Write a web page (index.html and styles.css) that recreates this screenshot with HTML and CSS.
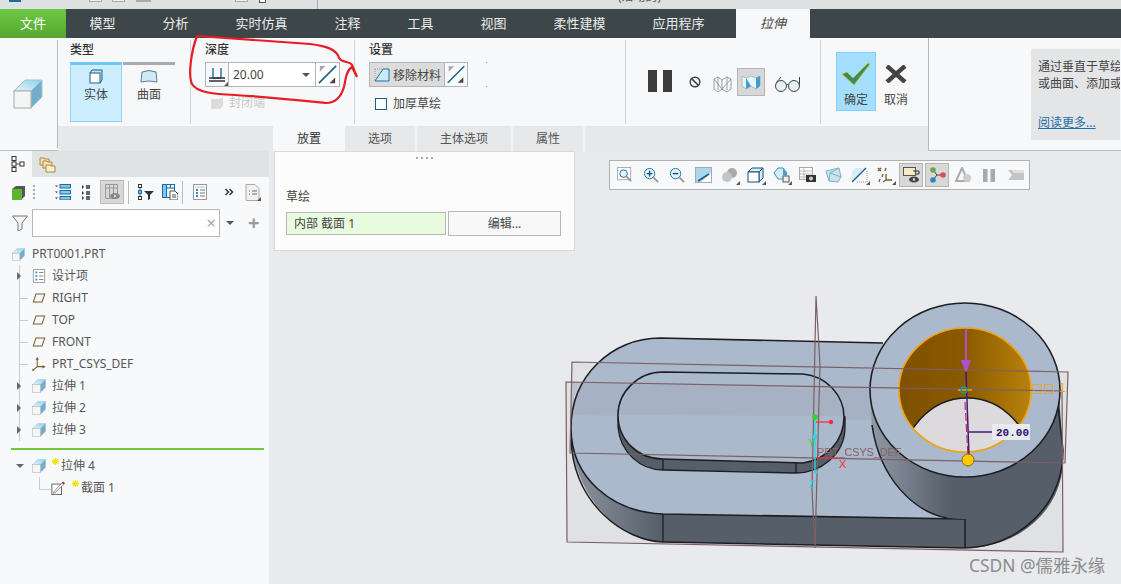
FILE: index.html
```html
<!DOCTYPE html>
<html lang="zh">
<head>
<meta charset="utf-8">
<title>拉伸</title>
<link rel="stylesheet" href="styles.css">
</head>
<body>
<svg class="defs" width="0" height="0">
  <defs>
    <linearGradient id="gTop" x1="0" y1="1" x2="1" y2="0"><stop offset="0" stop-color="#e4f4fb"/><stop offset="1" stop-color="#8fd0ea"/></linearGradient>
    <linearGradient id="gWall" gradientUnits="userSpaceOnUse" x1="571" y1="0" x2="663" y2="0"><stop offset="0" stop-color="#8a949f"/><stop offset="1" stop-color="#565e69"/></linearGradient>
    <linearGradient id="gBoss" gradientUnits="userSpaceOnUse" x1="872" y1="0" x2="950" y2="0"><stop offset="0" stop-color="#8e98a4"/><stop offset="1" stop-color="#565e69"/></linearGradient>
    <linearGradient id="gHole" gradientUnits="userSpaceOnUse" x1="898" y1="0" x2="1031" y2="0"><stop offset="0" stop-color="#7f5000"/><stop offset=".5" stop-color="#8a5a00"/><stop offset="1" stop-color="#b8820a"/></linearGradient>
    <symbol id="cube" viewBox="0 0 30 30">
      <path d="M1 12 12 1h17L18 12z" fill="url(#gTop)" stroke="#9cc7da"/>
      <path d="M18 12 29 1v17L18 29z" fill="#74adc9" stroke="#9cc7da"/>
      <rect x="1" y="12" width="17" height="17" fill="#f5f5f5" stroke="#a8a8a8"/>
    </symbol>
    <symbol id="flip" viewBox="0 0 24 24">
      <path d="M3 21 21 3" stroke="#1a5f86" stroke-width="1.6" fill="none"/>
      <path d="M4 3h6L4 9z" fill="#a8a8a8"/><path d="M20 21h-6l6-6z" fill="#444"/>
    </symbol>
    <symbol id="plane" viewBox="0 0 16 12">
      <path d="M4.5 1.5h10l-3 9h-10z" fill="none" stroke="#7a5c2e" stroke-width="1.2"/>
    </symbol>
    <symbol id="star" viewBox="0 0 8 8">
      <path d="M4 0v8M0 4h8M1 1l6 6M7 1 1 7" stroke="#f2e400" stroke-width="1.5"/>
    </symbol>
    <symbol id="corner" viewBox="0 0 4 4"><path d="M4 0v4H0z" fill="#555"/></symbol>
  </defs>
</svg>

<div class="app">
  <div class="titlebar">
    <span class="tb-a"></span><span class="tb-b tb-b1"></span><span class="tb-b tb-b2"></span><span class="tb-b tb-b3"></span><span class="tb-b tb-b4"></span><span class="tb-w"></span>
    <span class="tb-sep"></span>
    <span class="tb-title">(活动的)</span>
  </div>

  <nav class="tabs">
    <span class="tab tab-file">文件</span>
    <span class="tab">模型</span>
    <span class="tab">分析</span>
    <span class="tab">实时仿真</span>
    <span class="tab">注释</span>
    <span class="tab">工具</span>
    <span class="tab">视图</span>
    <span class="tab">柔性建模</span>
    <span class="tab">应用程序</span>
    <span class="tab tab-active">拉伸</span>
  </nav>

  <section class="ribbon">
    <div class="rb-lead"><svg class="lead-cube"><use href="#cube"/></svg></div>
    <div class="rb-main">
      <div class="rb-groups">
        <div class="group g-type">
          <div class="g-label">类型</div>
          <div class="type-row">
            <div class="type-btn type-on">
              <svg width="16" height="16" viewBox="0 0 16 16"><path d="M2 4 4 1h10v10l-2 3z" fill="#bfe3f2" stroke="#1f5f7f"/><rect x="2" y="4" width="10" height="10" fill="#fff" stroke="#1f5f7f"/></svg>
              <span>实体</span>
            </div>
            <div class="type-btn">
              <svg width="18" height="16" viewBox="0 0 18 16"><path d="M2 3q7-3 14 0l1 10q-8-2-16 0z" fill="#cfeaf6" stroke="#5b7f90"/></svg>
              <span>曲面</span>
            </div>
          </div>
        </div>

        <div class="group g-depth">
          <div class="g-label">深度</div>
          <div class="depth-box">
            <div class="depth-type">
              <svg width="18" height="18" viewBox="0 0 18 18"><path d="M5 2v10h8V2" fill="none" stroke="#1a6fa0" stroke-width="1.4"/><path d="M1 12h16M1 15h16" stroke="#333" stroke-width="1.3"/></svg>
              <svg class="corner"><use href="#corner"/></svg>
            </div>
            <div class="depth-val"><span>20.00</span><i class="caret"></i></div>
            <svg class="flip-btn"><use href="#flip"/></svg>
          </div>
          <div class="closed">
            <svg width="14" height="14" viewBox="0 0 14 14"><path d="M1 3h9l3-2v9l-3 3H1z" fill="#dcdcdc"/></svg>
            <span>封闭端</span>
          </div>
        </div>

        <div class="group g-set">
          <div class="g-label">设置</div>
          <div class="set-row">
            <div class="remove-btn">
              <svg width="16" height="16" viewBox="0 0 16 16"><path d="M1 14 9 2h6v12z" fill="#c8ecfa" stroke="#1a6fa0"/><path d="M1 2h7" stroke="#999" stroke-dasharray="1 1"/><path d="M1 2v11" stroke="#999" stroke-dasharray="1 1"/></svg>
              <span>移除材料</span>
            </div>
            <svg class="flip-btn flip-set"><use href="#flip"/></svg>
            <div class="ticks"><i></i><i></i></div>
          </div>
          <label class="thicken"><i class="check"></i><span>加厚草绘</span></label>
        </div>

        <div class="group g-ctrl">
          <svg width="24" height="22" viewBox="0 0 24 22"><rect x="0" y="0" width="9" height="22" fill="#3b3b3b"/><rect x="15" y="0" width="9" height="22" fill="#3b3b3b"/></svg>
          <svg class="m-no" width="12" height="12" viewBox="0 0 12 12"><circle cx="6" cy="6" r="4.8" fill="none" stroke="#444" stroke-width="1.5"/><path d="M2.6 2.6l6.8 6.8" stroke="#444" stroke-width="1.5"/></svg>
          <svg class="m-wire" width="19" height="18" viewBox="0 0 19 18"><path d="M1 4l4-2 4 3 5-3 4 2v10l-4 3-5-3-4 3-4-3zM5 2v13M14 2v13M9 5v9M1 4l8 10M18 4l-9 10" fill="none" stroke="#888" stroke-width=".8"/></svg>
          <div class="shade-btn"><svg width="20" height="15" viewBox="0 0 20 15"><path d="M1 1l4 2 5-2 5 2 4-2v10l-4 3-5-3-5 3-4-3z" fill="#e4f5fc" stroke="#999" stroke-width=".6"/><path d="M5 3l5 8-5 3zM15 3l4-2v10l-4 3z" fill="#3f9fd0"/></svg></div>
          <svg class="m-glass" width="27" height="16" viewBox="0 0 27 16"><circle cx="7" cy="10" r="5.5" fill="#e4f1f6" stroke="#444"/><circle cx="20" cy="10" r="5.5" fill="#e4f1f6" stroke="#444"/><path d="M12.5 9q1-1 2 0M2 7l5-6M25.5 9V1" fill="none" stroke="#444"/></svg>
        </div>

        <div class="group g-ok">
          <div class="ok-btn">
            <svg width="30" height="24" viewBox="0 0 30 24"><path d="M1 12l5-2 6 6L27 1l2 1-16 21z" fill="#3d8a5f" stroke="#c9c92a" stroke-width=".8"/></svg>
            <span>确定</span>
          </div>
          <div class="cancel-btn">
            <svg width="22" height="18" viewBox="0 0 22 18"><path d="M2 1l18 16M20 1 2 17" stroke="#444" stroke-width="4.4"/></svg>
            <span>取消</span>
          </div>
        </div>
      </div>
      <div class="rb-tabs">
        <span class="rt rt-on">放置</span>
        <span class="rt">选项</span>
        <span class="rt rt-wide">主体选项</span>
        <span class="rt">属性</span>
      </div>
    </div>
    <div class="rb-help">
      <div class="help-box">
        <p>通过垂直于草绘</p>
        <p>或曲面、添加或</p>
        <a class="help-link">阅读更多...</a>
      </div>
    </div>
  </section>

  <div class="main">
    <aside class="side">
      <div class="side-tabs">
        <div class="side-tab">
          <svg width="14" height="16" viewBox="0 0 14 16"><path d="M3 4v9M3 8h6" stroke="#444"/><rect x="1" y="0.5" width="4" height="4" fill="#fff" stroke="#333"/><rect x="1" y="6" width="4" height="4" fill="#fff" stroke="#333"/><rect x="1" y="11.5" width="4" height="4" fill="#fff" stroke="#333"/><rect x="9" y="6" width="4" height="4" fill="#fff" stroke="#333"/></svg>
        </div>
        <svg class="folders" width="17" height="17" viewBox="0 0 17 17"><path d="M1 2h4l1 1h4v6H1z" fill="#f6e2b0" stroke="#a98a4a"/><path d="M4 5h4l1 1h4v6H4z" fill="#f6e2b0" stroke="#a98a4a"/><path d="M7 9h4l1 1h4v6H7z" fill="#fbeec8" stroke="#a98a4a"/></svg>
      </div>

      <div class="side-tools">
        <svg width="14" height="15" viewBox="0 0 14 15"><path d="M0 4l4-3h9v10l-3 3H0z" fill="#555"/><rect x="0" y="4" width="10" height="11" fill="#5cb531"/></svg>
        <i class="grip"></i>
        <svg class="t-list" width="16" height="16" viewBox="0 0 16 16"><path d="M0 1.5h3L1.5 3zM0 7.5h3L1.5 9zM0 13.5h3L1.5 15z" fill="#333"/><g fill="#7cc8ee" stroke="#1a6fa0"><rect x="5" y="0.5" width="10.500" height="3.500"/><rect x="5" y="6.500" width="10.500" height="3.500"/><rect x="5" y="12.500" width="10.500" height="3.500"/></g></svg>
        <svg class="t-grid" width="9" height="16" viewBox="0 0 9 16"><path d="M0 1l2 2-2 2zM0 7l2 2-2 2zM0 12l2 2-2 2z" fill="#333"/><rect x="4" y="1" width="4" height="4" fill="#666"/><rect x="4" y="7" width="4" height="4" fill="#666"/><rect x="4" y="12" width="4" height="4" fill="#666"/></svg>
        <div class="t-active"><svg width="15" height="16" viewBox="0 0 15 16"><path d="M.5.5h12v14H.5zM.5 4h12M4.500.5v14M8.500.5v14" fill="none" stroke="#999"/><ellipse cx="10" cy="12" rx="5" ry="3" fill="#888"/><circle cx="10" cy="12" r="1.200" fill="#ddd"/></svg></div>
        <i class="t-sep"></i>
        <svg class="t-m1" width="16" height="16" viewBox="0 0 16 16"><path d="M2 3v10" stroke="#1a6fa0"/><rect x=".5" y=".5" width="3" height="3" fill="#fff" stroke="#333"/><rect x=".5" y="6.500" width="3" height="3" fill="#7cc8ee" stroke="#1a6fa0"/><rect x=".5" y="12.500" width="3" height="3" fill="#fff" stroke="#333"/><path d="M6 7h10l-4 4v4l-2 1v-5z" fill="#333"/></svg>
        <svg class="t-m2" width="16" height="16" viewBox="0 0 16 16"><rect x=".5" y=".5" width="12" height="13" fill="#eaf6fc" stroke="#1a6fa0"/><rect x=".5" y=".5" width="4" height="13" fill="#7cc8ee" stroke="#1a6fa0"/><path d="M4.500 4h8M8.500.5V4" stroke="#1a6fa0"/><path d="M8 7h5l3 3v6H8z" fill="#fff" stroke="#555"/><path d="M10 11h4M10 13h4" stroke="#555"/></svg>
        <i class="t-sep"></i>
        <svg class="t-m3" width="14" height="16" viewBox="0 0 14 16"><rect x=".5" y=".5" width="13" height="15" fill="#fff" stroke="#999"/><path d="M2 3h10" stroke="#9cc"/><g fill="#2a8fc4"><rect x="3" y="5" width="2" height="2"/><rect x="3" y="8" width="2" height="2"/><rect x="3" y="11" width="2" height="2"/></g><path d="M7 6h5M7 9h5M7 12h5" stroke="#777"/></svg>
        <svg class="t-more" width="9" height="8" viewBox="0 0 9 8"><path d="M.5 1 3.500 4 .5 7M4.500 1 7.500 4 4.500 7" fill="none" stroke="#333" stroke-width="1.500"/></svg>
        <svg class="t-m4" width="16" height="17" viewBox="0 0 16 17"><path d="M1 .5h9l4 4v12H1z" fill="#f1f1f1" stroke="#aaa"/><path d="M4 7h1M7 7h5M4 10h1M7 10h5" stroke="#666"/><path d="M16 13v4h-4z" fill="#555"/></svg>
      </div>

      <div class="side-search">
        <svg width="16" height="16" viewBox="0 0 16 16"><path d="M.5 1h15L10 8v6l-4 2V8z" fill="#f3f3f3" stroke="#777"/></svg>
        <div class="search-box"><span class="clear">×</span></div>
        <i class="caret caret-s"></i>
        <span class="plus">+</span>
      </div>

      <div class="tree">
        <div class="row row-root"><svg class="ri"><use href="#cube"/></svg><span>PRT0001.PRT</span></div>
        <div class="row t open"><svg class="ri" viewBox="0 0 14 16"><rect x=".5" y=".5" width="13" height="15" fill="#fff" stroke="#999"/><g fill="#2a8fc4"><rect x="3" y="3" width="2" height="2"/><rect x="3" y="7" width="2" height="2"/><rect x="3" y="11" width="2" height="2"/></g><path d="M7 4h5M7 8h5M7 12h5" stroke="#777"/></svg><span>设计项</span></div>
        <div class="row t"><svg class="ri"><use href="#plane"/></svg><span>RIGHT</span></div>
        <div class="row t"><svg class="ri"><use href="#plane"/></svg><span>TOP</span></div>
        <div class="row t"><svg class="ri"><use href="#plane"/></svg><span>FRONT</span></div>
        <div class="row t"><svg class="ri" viewBox="0 0 16 16"><path d="M6 1v10l-5 4M6 11h9" fill="none" stroke="#7a5c2e" stroke-width="1.200"/><path d="M6 0l2 3H4zM15 11l-3-2v4zM0 16l1-3 2 2z" fill="#7a5c2e"/></svg><span>PRT_CSYS_DEF</span></div>
        <div class="row t open"><svg class="ri"><use href="#cube"/></svg><span>拉伸 1</span></div>
        <div class="row t open"><svg class="ri"><use href="#cube"/></svg><span>拉伸 2</span></div>
        <div class="row t open"><svg class="ri"><use href="#cube"/></svg><span>拉伸 3</span></div>
        <div class="insert"></div>
        <div class="row expanded"><svg class="ri"><use href="#cube"/></svg><svg class="st"><use href="#star"/></svg><span>拉伸 4</span></div>
        <div class="row sub"><svg class="ri" viewBox="0 0 15 16"><rect x=".5" y="3.500" width="11" height="12" fill="#fff" stroke="#555"/><path d="M3 12 12 2l2 2-9 9-3 1z" fill="#eee" stroke="#555" stroke-width=".7"/><path d="M12 2l1.500-1.500 2 2L14 4z" fill="#b03030"/></svg><svg class="st"><use href="#star"/></svg><span>截面 1</span></div>
      </div>
    </aside>

    <div class="canvas">
      <svg class="scene" width="852" height="433" viewBox="269 151 852 433">
        <path d="M572 362 1068 372 1065 463 570 453z" fill="#e0e1e3"/>
        <path d="M566 382 1062 391 1063 552 567 542z" fill="#e0e1e3"/>

        <path d="M571 425C571 440 571 450 574 460 588 510 625 541 663 542L965 548 965 500 700 470z" fill="url(#gWall)"/>
        <path d="M663 514 965 519V548L663 542z" fill="#565e69"/>
        <path d="M663 514V542" stroke="#1e1e22" stroke-width="1.300"/>
        <path d="M571 440C574 505 625 541 663 542L965 548" fill="none" stroke="#1e1e22" stroke-width="1.500"/>

        <path d="M660 338 883 343 964 519 663 514C612 512 571 478 571 428 571 376 612 338 660 338z" fill="#aab9cc"/>
        <path d="M572 382 880 388 875 420 571 415z" fill="#a3adbe" opacity=".55"/>
        <path d="M883 343 660 338C612 338 571 376 571 428 571 478 612 512 663 514L964 519" fill="none" stroke="#1e1e22" stroke-width="1.600"/>

        <path d="M618 427C620 452 640 470 663 470L796 473C820 473 845 455 845 427V417L618 415z" fill="#565e69" stroke="#1e1e22" stroke-width="1.300"/>
        <path d="M663 459V470M796 463V473" stroke="#1e1e22" stroke-width="1.300"/>
        <path d="M663 372 803 374C826 376 844 395 844 417 844 441 826 460 803 463L663 459C638 459 618 440 618 415 618 392 638 372 663 372z" fill="#aab9cc"/>
        <path d="M630 382 836 390 844 416 618 415z" fill="#a3adbe" opacity=".55"/>
        <path d="M663 372 803 374C826 376 844 395 844 417 844 441 826 460 803 463L663 459C638 459 618 440 618 415 618 392 638 372 663 372z" fill="none" stroke="#1e1e22" stroke-width="1.500"/>

        <path d="M870 390 872 430C880 480 915 512 947 518L965 519V548A97 88 0 0 0 1063 460L1059 390z" fill="url(#gBoss)"/>
        <path d="M872 425C880 480 915 512 947 518M965 519V548M965 548C1020 546 1063 505 1063 450L1058 405" fill="none" stroke="#1e1e22" stroke-width="1.500"/>

        <ellipse cx="965" cy="390" rx="95" ry="87" fill="#aab9cc" stroke="#1e1e22" stroke-width="1.600"/>
        <clipPath id="holeClip"><ellipse cx="965" cy="390" rx="66" ry="62"/></clipPath>
        <ellipse cx="965" cy="390" rx="66" ry="62" fill="url(#gHole)"/>
        <g clip-path="url(#holeClip)">
          <ellipse cx="967" cy="470" rx="66" ry="72" fill="#dcdadd" stroke="#1e1e22" stroke-width="1.500"/>
        </g>
        <ellipse cx="965" cy="390" rx="66" ry="62" fill="none" stroke="#f2a30f" stroke-width="1.600"/>

        <g fill="none" stroke="#7d5f64" stroke-width="1.200">
          <path d="M572 362 1068 372 1065 463 570 453z"/>
          <path d="M566 382 1062 391 1063 552 567 542z"/>
          <path d="M816 296 820 365 815 548 812 490z"/>
        </g>

        <path d="M966 329V362" stroke="#b04fd0" stroke-width="2"/>
        <path d="M961 360h10l-4 11h-2z" fill="#b04fd0"/>
        <path d="M966 372 969 457M969 432H993" fill="none" stroke="#3f1a78" stroke-width="1.500"/>
        <path d="M965 402 968 456" stroke="#c02870" stroke-width="1.200" stroke-dasharray="8 3"/>
        <path d="M958 390H972" stroke="#f2a30f" stroke-width="1.500"/>
        <circle cx="964" cy="390" r="3" fill="none" stroke="#1a9a9a" stroke-width="1.500"/>
        <circle cx="968" cy="460" r="6" fill="#ffc800" stroke="#8c6b00"/>
        <rect x="992" y="424" width="38" height="16" fill="#e8eaee"/>
        <text class="dim" x="996" y="436">20.00</text>
        <text class="hole-lab" x="1032" y="392">□□ 1</text>

        <path d="M815 417V472" stroke="#29d8e8" stroke-width="1.300"/>
        <path d="M816 422H831" stroke="#f03030" stroke-width="1.200"/>
        <path d="M817 458H838" stroke="#f03030" stroke-width="1.200"/>
        <circle cx="815" cy="417" r="2.800" fill="#2fd82f"/>
        <circle cx="831" cy="422" r="2.200" fill="#f03030"/>
        <circle cx="815" cy="437" r="2.400" fill="#29d8e8"/>
        <circle cx="816" cy="472" r="1.800" fill="#29d8e8"/>
        <text class="ax ax-y" x="808" y="447">Y</text>
        <text class="ax ax-x" x="839" y="468">X</text>
        <text class="ax ax-z" x="808" y="488">Z</text>
        <text class="csys" x="817" y="456">PRT_CSYS_DEF</text>
      </svg>

      <div class="float-panel">
        <div class="drag"></div>
        <div class="fp-label">草绘</div>
        <div class="fp-row">
          <div class="fp-input">内部 截面 1</div>
          <div class="fp-btn">编辑...</div>
        </div>
      </div>

      <div class="view-bar">
        <span class="vb"><svg width="16" height="16" viewBox="0 0 17 17"><rect x=".5" y=".5" width="14" height="13" fill="#fff" stroke="#aaa"/><circle cx="7" cy="7" r="4" fill="#e4f3fa" stroke="#1a6fa0"/><path d="M10 10l5 5" stroke="#999" stroke-width="2"/></svg></span>
        <span class="vb"><svg width="16" height="16" viewBox="0 0 17 17"><circle cx="7" cy="7" r="5.500" fill="#e4f3fa" stroke="#1a6fa0"/><path d="M4 7h6M7 4v6" stroke="#1a4f70" stroke-width="1.500"/><path d="M11 11l5 5" stroke="#999" stroke-width="2"/></svg></span>
        <span class="vb"><svg width="16" height="16" viewBox="0 0 17 17"><circle cx="7" cy="7" r="5.500" fill="#e4f3fa" stroke="#1a6fa0"/><path d="M4 7h6" stroke="#1a4f70" stroke-width="1.500"/><path d="M11 11l5 5" stroke="#999" stroke-width="2"/></svg></span>
        <span class="vb"><svg width="17" height="16" viewBox="0 0 17 16"><rect x=".5" y=".5" width="16" height="15" fill="#fff" stroke="#aaa"/><path d="M1 1h15v5L6 15H1z" fill="#a9d8ec"/><path d="M3 14 14 7" stroke="#1a5f86" stroke-width="1.500"/></svg></span>
        <span class="vb dd"><svg width="17" height="16" viewBox="0 0 17 16"><circle cx="11" cy="6" r="5" fill="#aaa"/><circle cx="6" cy="10" r="5" fill="#c4c4c4"/></svg></span>
        <span class="vb dd"><svg width="17" height="16" viewBox="0 0 17 16"><path d="M1 5l4-4h11L12 5zM12 5l4-4v10l-4 4z" fill="#d8eef7" stroke="#1a4f70"/><rect x="1" y="5" width="11" height="10" fill="#fff" stroke="#1a4f70"/></svg></span>
        <span class="vb dd"><svg width="17" height="16" viewBox="0 0 17 16"><path d="M1 6l4-5h5l4 5-4 6H5z" fill="#d4edf8" stroke="#3f8fb8"/><path d="M10 1l4 5v2h-4z" fill="#3f9fd0"/><rect x="10" y="9" width="6" height="6" fill="#eee" stroke="#555"/></svg></span>
        <span class="vb"><svg width="17" height="16" viewBox="0 0 17 16"><rect x=".5" y=".5" width="13" height="12" fill="#fff" stroke="#aaa"/><path d="M1 4h12M1 7h12M1 10h12M5 1v11" stroke="#bbb"/><rect x="7" y="8" width="10" height="7" fill="#333"/><circle cx="12" cy="11.500" r="2" fill="#ccc"/></svg></span>
        <span class="vb"><svg width="17" height="16" viewBox="0 0 17 16"><path d="M1 4l13-3 2 9-3 5-9-1z" fill="#c8e4ef" stroke="#7fb0c4"/><path d="M5 6l9-5M5 6l-1 8M5 6l11 4" stroke="#7fb0c4" fill="none"/></svg></span>
        <span class="vb dd"><svg width="17" height="16" viewBox="0 0 17 16"><path d="M4 1h12L1 15V5z" fill="#d4edf8"/><path d="M1 15 15 1" stroke="#1a5f86" stroke-width="1.200"/><path d="M16 4v11H5" fill="none" stroke="#999" stroke-dasharray="1 1"/></svg></span>
        <span class="vb dd"><svg width="17" height="16" viewBox="0 0 17 16"><path d="M1 1l3 3M4 1 1 4" stroke="#7a5c2e" stroke-width="1.300"/><path d="M9 1 8 4M6 7 5 10M3 12 2 15" stroke="#7a5c2e" stroke-width="1.300"/><path d="M9 7v6h6M9 13l-3 2" fill="none" stroke="#7a5c2e" stroke-width="1.300"/></svg></span>
        <span class="vb on"><svg width="17" height="16" viewBox="0 0 17 16"><rect x=".5" y=".5" width="12" height="8" fill="#f6e9c4" stroke="#555"/><path d="M10 4h6v3h-3" fill="none" stroke="#333"/><ellipse cx="11" cy="12.500" rx="5" ry="3" fill="#444"/><circle cx="11" cy="12.500" r="1.200" fill="#ddd"/></svg></span>
        <span class="vb on"><svg width="17" height="16" viewBox="0 0 17 16"><path d="M4 3l4 5-4 5M8 8h6" fill="none" stroke="#444"/><circle cx="4" cy="3" r="2.800" fill="#6ca84a"/><circle cx="4" cy="13" r="2.800" fill="#2f86c0"/><circle cx="14" cy="8" r="2.800" fill="#d85050"/></svg></span>
        <span class="vb"><svg width="17" height="16" viewBox="0 0 17 16"><path d="M7 1 1 14h12z" fill="none" stroke="#aaa" stroke-width="2"/><circle cx="12" cy="11" r="4" fill="#ccc"/></svg></span>
        <span class="vb"><svg width="12" height="13" viewBox="0 0 12 13"><rect width="4.500" height="13" fill="#aaa"/><rect x="7.500" width="4.500" height="13" fill="#aaa"/></svg></span>
        <span class="vb"><svg width="17" height="12" viewBox="0 0 17 12"><path d="M1 1h16v10H1l4-5z" fill="#c4c4c4"/><path d="M5 1h12v3H7z" fill="#e0e0e0"/></svg></span>
      </div>

      <div class="watermark">CSDN @儒雅永缘</div>
    </div>
  </div>

  <svg class="scribble" width="400" height="125" viewBox="0 0 400 125">
    <path d="M197 36C225 38 270 41 310 44 328 46 337 50 339 58 342 63 350 61 352 65L357 77 352 67C347 70 346 76 344 87 341 97 336 103 326 103 305 101 270 97 235 95 215 94 197 93 192 84 188 75 191 52 197 36z" fill="none" stroke="#e81c24" stroke-width="2.200"/>
  </svg>
</div>
</body>
</html>
```

FILE: styles.css
```css
* { box-sizing: border-box; }
html, body { margin: 0; padding: 0; }
body {
  width: 1121px;
  height: 584px;
  overflow: hidden;
  background: #e8eaee;
  font-family: "Noto Sans", "Noto Sans CJK SC", sans-serif;
  font-size: 12px;
  color: #444;
}
.defs { position: absolute; }
.app { position: relative; width: 1121px; height: 584px; display: flex; flex-direction: column; overflow: hidden; }

.titlebar { height: 9px; background: #dde1e1; display: flex; align-items: flex-start; overflow: hidden; flex: none; }
.tb-a { width: 12px; height: 2px; margin-left: 9px; background: #1a6fa0; }
.tb-b { width: 13px; height: 2px; background: #eee; border: 1px solid #aaa; border-top: 0; }
.tb-b1 { margin-left: 68px; }
.tb-b2 { margin-left: 10px; }
.tb-b3 { margin-left: 11px; width: 15px; background: #aaa; }
.tb-b4 { margin-left: 84px; }
.tb-w { width: 7px; height: 3px; margin-left: 11px; background: #fff; border: 1px solid #555; border-top: 0; }
.tb-sep { width: 1px; height: 9px; background: #aab; margin-left: 51px; }
.tb-title { margin: -11px 0 0 300px; font-size: 12px; line-height: 16px; color: #555; white-space: nowrap; }

.tabs { height: 29px; background: #3d4648; display: flex; flex: none; }
.tab { width: 73px; flex: none; line-height: 29px; text-align: center; font-size: 13px; color: #ececec; }
.tab:nth-child(4), .tab:nth-child(8), .tab:nth-child(9) { width: 99px; }
.tab-file { width: 66px; color: #fff; background: linear-gradient(#6cc843, #55a72f); }
.tab-active { width: 74px; margin-left: 8px; background: #f7f8fa; color: #444; font-style: italic; }

.ribbon { height: 113px; flex: none; display: flex; background: #f7f8fa; border-bottom: 1px solid #b9c1c1; }
.rb-lead { width: 58px; flex: none; border-right: 1px solid #b8b8b8; padding: 39px 0 0 13px; margin-top: 2px; height: 108px; }
.lead-cube { width: 30px; height: 30px; display: block; }
.rb-main { width: 871px; flex: none; display: flex; flex-direction: column; border-right: 1px solid #b8b8b8; }
.rb-groups { height: 88px; display: flex; flex: none; }
.group { flex: none; border-right: 1px solid #d2d4d6; margin-top: 2px; height: 84px; }
.g-label { line-height: 14px; margin-top: 3px; color: #333; font-weight: 500; }

.g-type { width: 133px; padding-left: 12px; }
.type-row { display: flex; gap: 1px; margin-top: 5px; }
.type-btn { width: 52px; height: 60px; border-top: 3px solid #aaa; display: flex; flex-direction: column; align-items: center; padding-top: 4px; gap: 2px; }
.type-on { background: #cdeeff; border: 1px solid #8fd4f8; border-top: 3px solid #6dc6f5; }
.type-btn span { line-height: 16px; }

.g-depth { width: 164px; padding-left: 14px; }
.depth-box { display: flex; width: 135px; height: 25px; border: 1px solid #b5b5b5; margin-top: 5px; background: #fff; }
.depth-type { width: 23px; flex: none; display: flex; align-items: center; justify-content: center; border-right: 1px solid #b5b5b5; position: relative; background: #f7f8fa; }
.corner { position: absolute; right: 0; bottom: 0; width: 4px; height: 4px; }
.depth-val { flex: 1; display: flex; align-items: center; justify-content: space-between; padding: 0 5px 0 4px; font-size: 12px; color: #444; }
.caret { display: block; width: 0; height: 0; border: 4px solid transparent; border-top: 4px solid #555; border-bottom: 0; }
.flip-btn { width: 24px; height: 23px; flex: none; border-left: 1px solid #b5b5b5; display: block; }
.closed { display: flex; align-items: center; gap: 5px; margin: 8px 0 0 5px; color: #c8c8c8; line-height: 16px; }

.g-set { width: 271px; padding-left: 14px; }
.set-row { display: flex; margin-top: 5px; align-items: stretch; height: 25px; }
.remove-btn { width: 76px; display: flex; align-items: center; gap: 3px; padding-left: 4px; background: #dcdcdc; border: 1px solid #b5b5b5; white-space: nowrap; }
.flip-set { width: 23px; height: 25px; border: 1px solid #b5b5b5; border-left: 0; }
.ticks { display: flex; flex-direction: column; justify-content: space-between; margin-left: 18px; }
.ticks i { width: 1px; height: 1px; background: #999; }
.thicken { display: flex; align-items: center; gap: 6px; margin: 9px 0 0 6px; line-height: 16px; }
.check { width: 12px; height: 12px; border: 1px solid #1f5f7f; background: #fbfcfd; }

.g-ctrl { width: 195px; padding: 29px 0 0 22px; display: flex; align-items: flex-start; }
.g-ctrl svg { margin-top: 1px; flex: none; }
.m-no { margin: 7px 0 0 17px !important; }
.m-wire { margin: 6px 0 0 12px !important; }
.shade-btn { width: 28px; height: 28px; margin: -1px 0 0 5px; background: #d8d8d8; border: 1px solid #b5b5b5; display: flex; align-items: center; justify-content: center; }
.m-glass { margin: 7px 0 0 9px !important; }

.g-ok { width: 108px; padding: 12px 0 0 15px; display: flex; border-right: 0; }
.ok-btn { width: 40px; height: 59px; background: #a5dfff; border: 1px solid #7fd0fb; display: flex; flex-direction: column; align-items: center; padding-top: 9px; gap: 6px; }
.ok-btn span, .cancel-btn span { line-height: 16px; }
.cancel-btn { width: 40px; display: flex; flex-direction: column; align-items: center; padding-top: 13px; gap: 9px; }

.rb-tabs { flex: 1; background: #e6e8ea; display: flex; padding-left: 215px; }
.rt { width: 72px; text-align: center; line-height: 25px; border-right: 2px solid #f2f3f4; color: #555; }
.rt-on { background: #f7f8fa; border: 0; color: #333; }
.rt-wide { width: 96px; }

.rb-help { flex: 1; padding: 11px 0 0 102px; overflow: hidden; }
.help-box { width: 89px; height: 91px; background: #e3e5e7; padding: 9px 0 0 7px; white-space: nowrap; overflow: hidden; color: #444; line-height: 17px; }
.help-box p { margin: 0; }
.help-link { display: block; margin-top: 22px; color: #1f6fa8; text-decoration: underline; }

.main { flex: 1; display: flex; min-height: 0; }
.side { width: 269px; flex: none; background: #f8f9fb; }
.side-tabs { height: 26px; background: #dfe3e3; display: flex; align-items: center; }
.side-tab { width: 32px; height: 26px; background: #f8f9fb; display: flex; align-items: center; justify-content: center; padding-left: 4px; }
.folders { margin-left: 7px; }

.side-tools { height: 28px; margin-top: 1px; display: flex; align-items: center; padding-left: 12px; }
.grip { width: 2px; height: 14px; margin-left: 7px; background: repeating-linear-gradient(#aaa 0 2px, transparent 2px 4px); }
.t-list { margin-left: 20px; }
.t-grid { margin-left: 11px; }
.t-active { width: 24px; height: 24px; margin-left: 9px; background: #d8d8d8; border: 1px solid #bbb; display: flex; align-items: center; justify-content: center; }
.t-sep { width: 1px; height: 23px; background: #bbb; margin-left: 4px; }
.t-m1 { margin-left: 9px; }
.t-m2 { margin-left: 8px; }
.t-m3 { margin-left: 10px; }
.t-more { margin-left: 18px; }
.t-m4 { margin-left: 11px; }

.side-search { height: 28px; margin-top: 3px; display: flex; align-items: center; padding-left: 12px; }
.search-box { width: 188px; height: 28px; margin-left: 4px; background: #fff; border: 1px solid #b8b8b8; display: flex; align-items: center; justify-content: flex-end; padding-right: 3px; }
.clear { font-size: 17px; color: #aaa; line-height: 20px; }
.caret-s { margin-left: 6px; }
.plus { margin-left: 14px; font-size: 20px; font-weight: 700; color: #999; line-height: 20px; }

.tree { padding-top: 6px; }
.row { height: 22px; display: flex; align-items: center; padding-left: 32px; position: relative; color: #555; line-height: 22px; white-space: nowrap; }
.row-root { padding-left: 12px; }
.ri { width: 14px; height: 14px; flex: none; margin-right: 6px; }
.row-root .ri { width: 13px; height: 13px; margin-right: 7px; }
.t::before { content: ""; position: absolute; left: 19px; top: 0; bottom: 0; width: 1px; background: #ccc; }
.t::after { content: ""; position: absolute; left: 19px; top: 11px; width: 9px; height: 1px; background: #ccc; }
.open::after { left: 17px; top: 7px; width: 0; height: 0; background: none; border: 4px solid transparent; border-left: 4px solid #666; border-right: 0; }
.insert { height: 2px; margin: 7px 5px 5px 11px; background: #6ec83f; position: relative; }
.st { width: 7px; height: 7px; position: absolute; }
.expanded .st { left: 52px; top: 3px; }
.expanded span { margin-left: 9px; }
.expanded::before { content: ""; position: absolute; left: 16px; top: 9px; border: 4px solid transparent; border-top: 4px solid #666; border-bottom: 0; }
.sub { padding-left: 51px; }
.sub .st { left: 72px; top: 3px; }
.sub span { margin-left: 10px; }
.sub::before { content: ""; position: absolute; left: 39px; top: 0; width: 11px; height: 12px; border-left: 1px solid #ccc; border-bottom: 1px solid #ccc; }

.canvas { flex: 1; position: relative; overflow: hidden; background: #e8eaee; }
.scene { position: absolute; left: 0; top: 0; }
.dim { font-family: "Liberation Mono", monospace; font-size: 11px; font-weight: 700; fill: #2f1070; }
.hole-lab { font-family: "DejaVu Sans", sans-serif; font-size: 12px; fill: #f2a30f; }
.ax { font-family: "Liberation Sans", sans-serif; font-size: 11px; }
.ax-y { fill: #2fd82f; }
.ax-x { fill: #f03030; }
.ax-z { fill: #29d8e8; }
.csys { font-family: "Liberation Sans", sans-serif; font-size: 10.8px; fill: #8a6468; }

.float-panel { position: absolute; left: 5px; top: 0; width: 301px; height: 100px; background: #fcfcfc; border: 1px solid #d8d8d8; padding: 0 11px; }
.drag { width: 18px; height: 2px; margin: 5px auto 0; background: repeating-linear-gradient(90deg, #aaa 0 2px, transparent 2px 5px); }
.fp-label { margin-top: 30px; line-height: 16px; }
.fp-row { display: flex; align-items: center; gap: 2px; margin-top: 6px; }
.fp-input { width: 160px; height: 23px; background: #e9fbdf; border: 1px solid #b8b8b8; line-height: 21px; padding-left: 7px; color: #444; }
.fp-btn { width: 113px; height: 25px; background: #f8f8f8; border: 1px solid #b8b8b8; line-height: 23px; text-align: center; }

.view-bar { position: absolute; left: 340px; top: 9px; width: 421px; height: 30px; background: #f7f8fa; border: 1px solid #b0b0b0; display: flex; align-items: center; padding-left: 3px; gap: 2px; }
.vb { width: 24px; height: 24px; flex: none; display: flex; align-items: center; justify-content: center; position: relative; border: 1px solid transparent; }
.vb.on { background: #d8d8d8; border-color: #b5b5b5; }
.dd::after { content: ""; position: absolute; right: 0; bottom: 1px; border: 2px solid transparent; border-right-color: #555; border-bottom-color: #555; }

.watermark { position: absolute; left: 700px; top: 403px; font-size: 17.4px; line-height: 22px; color: #8c8c8c; white-space: nowrap; }
.scribble { position: absolute; left: 0; top: 0; pointer-events: none; }
```
